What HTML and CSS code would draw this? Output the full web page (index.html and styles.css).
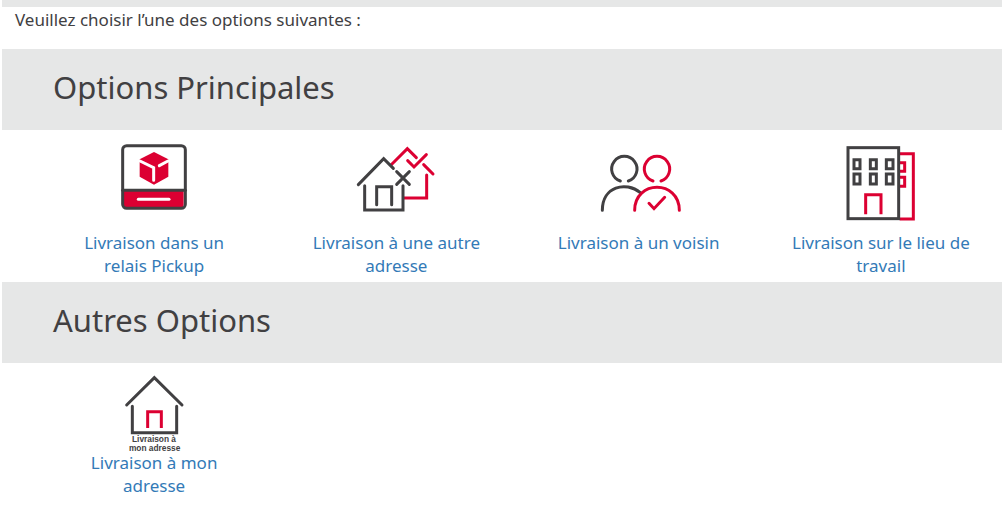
FILE: index.html
```html
<!DOCTYPE html>
<html lang="fr">
    <head>
        <meta charset="utf-8">
        <meta name="viewport" content="width=device-width, initial-scale=1">
        <title>Options de livraison</title>
        <link rel="stylesheet" href="styles.css">
    </head>
    <body>
        <div class="top-bar"></div>
        <p class="intro">Veuillez choisir l’une des options suivantes :</p>

        <h2 class="section-title">Options Principales</h2>
        <div class="options">
            <a class="option" href="#pickup">
                <svg class="icon" viewBox="-18 14 300 273" aria-hidden="true">
                    <path class="red-fill" d="M41 165h180v43q0 10-10 10H51q-10 0-10-10z"/>
                    <rect class="dark" x="38" y="31" width="188" height="188" rx="12"/>
                    <path class="dark" d="M38 165h188"/>
                    <path class="white" d="M85 192h92"/>
                    <path class="red-fill" d="M132 50l43 22v52l-43 24-43-24V72z"/>
                    <path class="white" d="M90 77l41 20v38M174 77l-26 14"/>
                </svg>
                <span>Livraison dans un relais Pickup</span>
            </a>
            <a class="option" href="#autre-adresse">
                <svg class="icon" viewBox="-11 13 300 273" aria-hidden="true">
                    <path class="red" d="M124 88l49-49 27 27M174 75l19 19 37-37M222 87l28 28M231 118v69h-68"/>
                    <path class="dark" d="M26 147l76-78 29 29M45 150v73h115v-73M81 207v-54h45v54M141 108l38 38M179 108l-38 38"/>
                </svg>
                <span>Livraison à une autre adresse</span>
            </a>
            <a class="option" href="#voisin">
                <svg class="icon" viewBox="-3 0 300 273" aria-hidden="true">
                    <path class="dark" d="M91 123a38 38 0 1 1 24 0M37 211c0-71 70-89 114-53"/>
                    <path class="red" d="M189 123a38 38 0 1 1 24 0M134 211c0-92 134-92 134 0M177 190l15 16 32-34"/>
                </svg>
                <span>Livraison à un voisin</span>
            </a>
            <a class="option" href="#travail">
                <svg class="icon square" viewBox="-11 14 300 273" aria-hidden="true">
                    <path class="red" d="M195 55h41v196h-41M195 82h15v26h-15M195 126h15v27h-15M93 237v-59h46v59"/>
                    <rect class="dark" x="40" y="37" width="152" height="213"/>
                    <path class="dark" d="M58 73h18v27H58zM107 73h18v27h-18zM155 73h20v27h-20zM58 116h18v30H58zM107 116h18v30h-18zM155 116h20v30h-20z"/>
                </svg>
                <span>Livraison sur le lieu de travail</span>
            </a>
        </div>

        <h2 class="section-title">Autres Options</h2>
        <div class="options">
            <a class="option" href="#mon-adresse">
                <svg class="icon small" viewBox="-18 25 300 234" aria-hidden="true">
                    <path class="dark" d="M50 121l83-82 83 82M67 125v79h133v-79"/>
                    <path class="red square" d="M113 190v-49h41v49"/>
                    <text x="132" y="233">Livraison à</text>
                    <text x="134" y="259">mon adresse</text>
                </svg>
                <span>Livraison à mon adresse</span>
            </a>
        </div>
    </body>
</html>
```
FILE: styles.css
```css
body {
    margin: 0 0 0 2px;
    background: #ffffff;
    color: #414042;
    font-family: "Noto Sans", "Open Sans", sans-serif;
    font-size: 17px;
    line-height: 23px;
}

.top-bar {
    height: 7px;
    background: #e6e7e7;
}

.intro {
    margin: 0;
    padding: 1px 13px 18px;
}

.section-title {
    margin: 0;
    padding: 18px 51px 23px;
    background: #e6e7e7;
    font-size: 31px;
    font-weight: normal;
    line-height: 40px;
}

.options {
    display: grid;
    grid-template-columns: repeat(4, 1fr);
    padding: 10px 0 5px 31px;
}

.option {
    display: flex;
    flex-direction: column;
    align-items: center;
    padding: 0 30px;
    color: #337ab7;
    text-align: center;
    text-decoration: none;
}

.option:hover {
    text-decoration: underline;
}

.icon {
    width: 100px;
    height: 91px;
    overflow: visible;
    fill: none;
    stroke-width: 9px;
    stroke-linecap: round;
}

.icon.small {
    height: 78px;
}

.icon.square,
.icon .square {
    stroke-linecap: butt;
}

.icon text {
    fill: #414042;
    font-family: "Liberation Sans", Arial, sans-serif;
    font-size: 25px;
    font-weight: bold;
    text-anchor: middle;
}

.dark {
    stroke: #414042;
}

.red {
    stroke: #dc0032;
}

.white {
    stroke: #ffffff;
}

.red-fill {
    fill: #dc0032;
}
```
